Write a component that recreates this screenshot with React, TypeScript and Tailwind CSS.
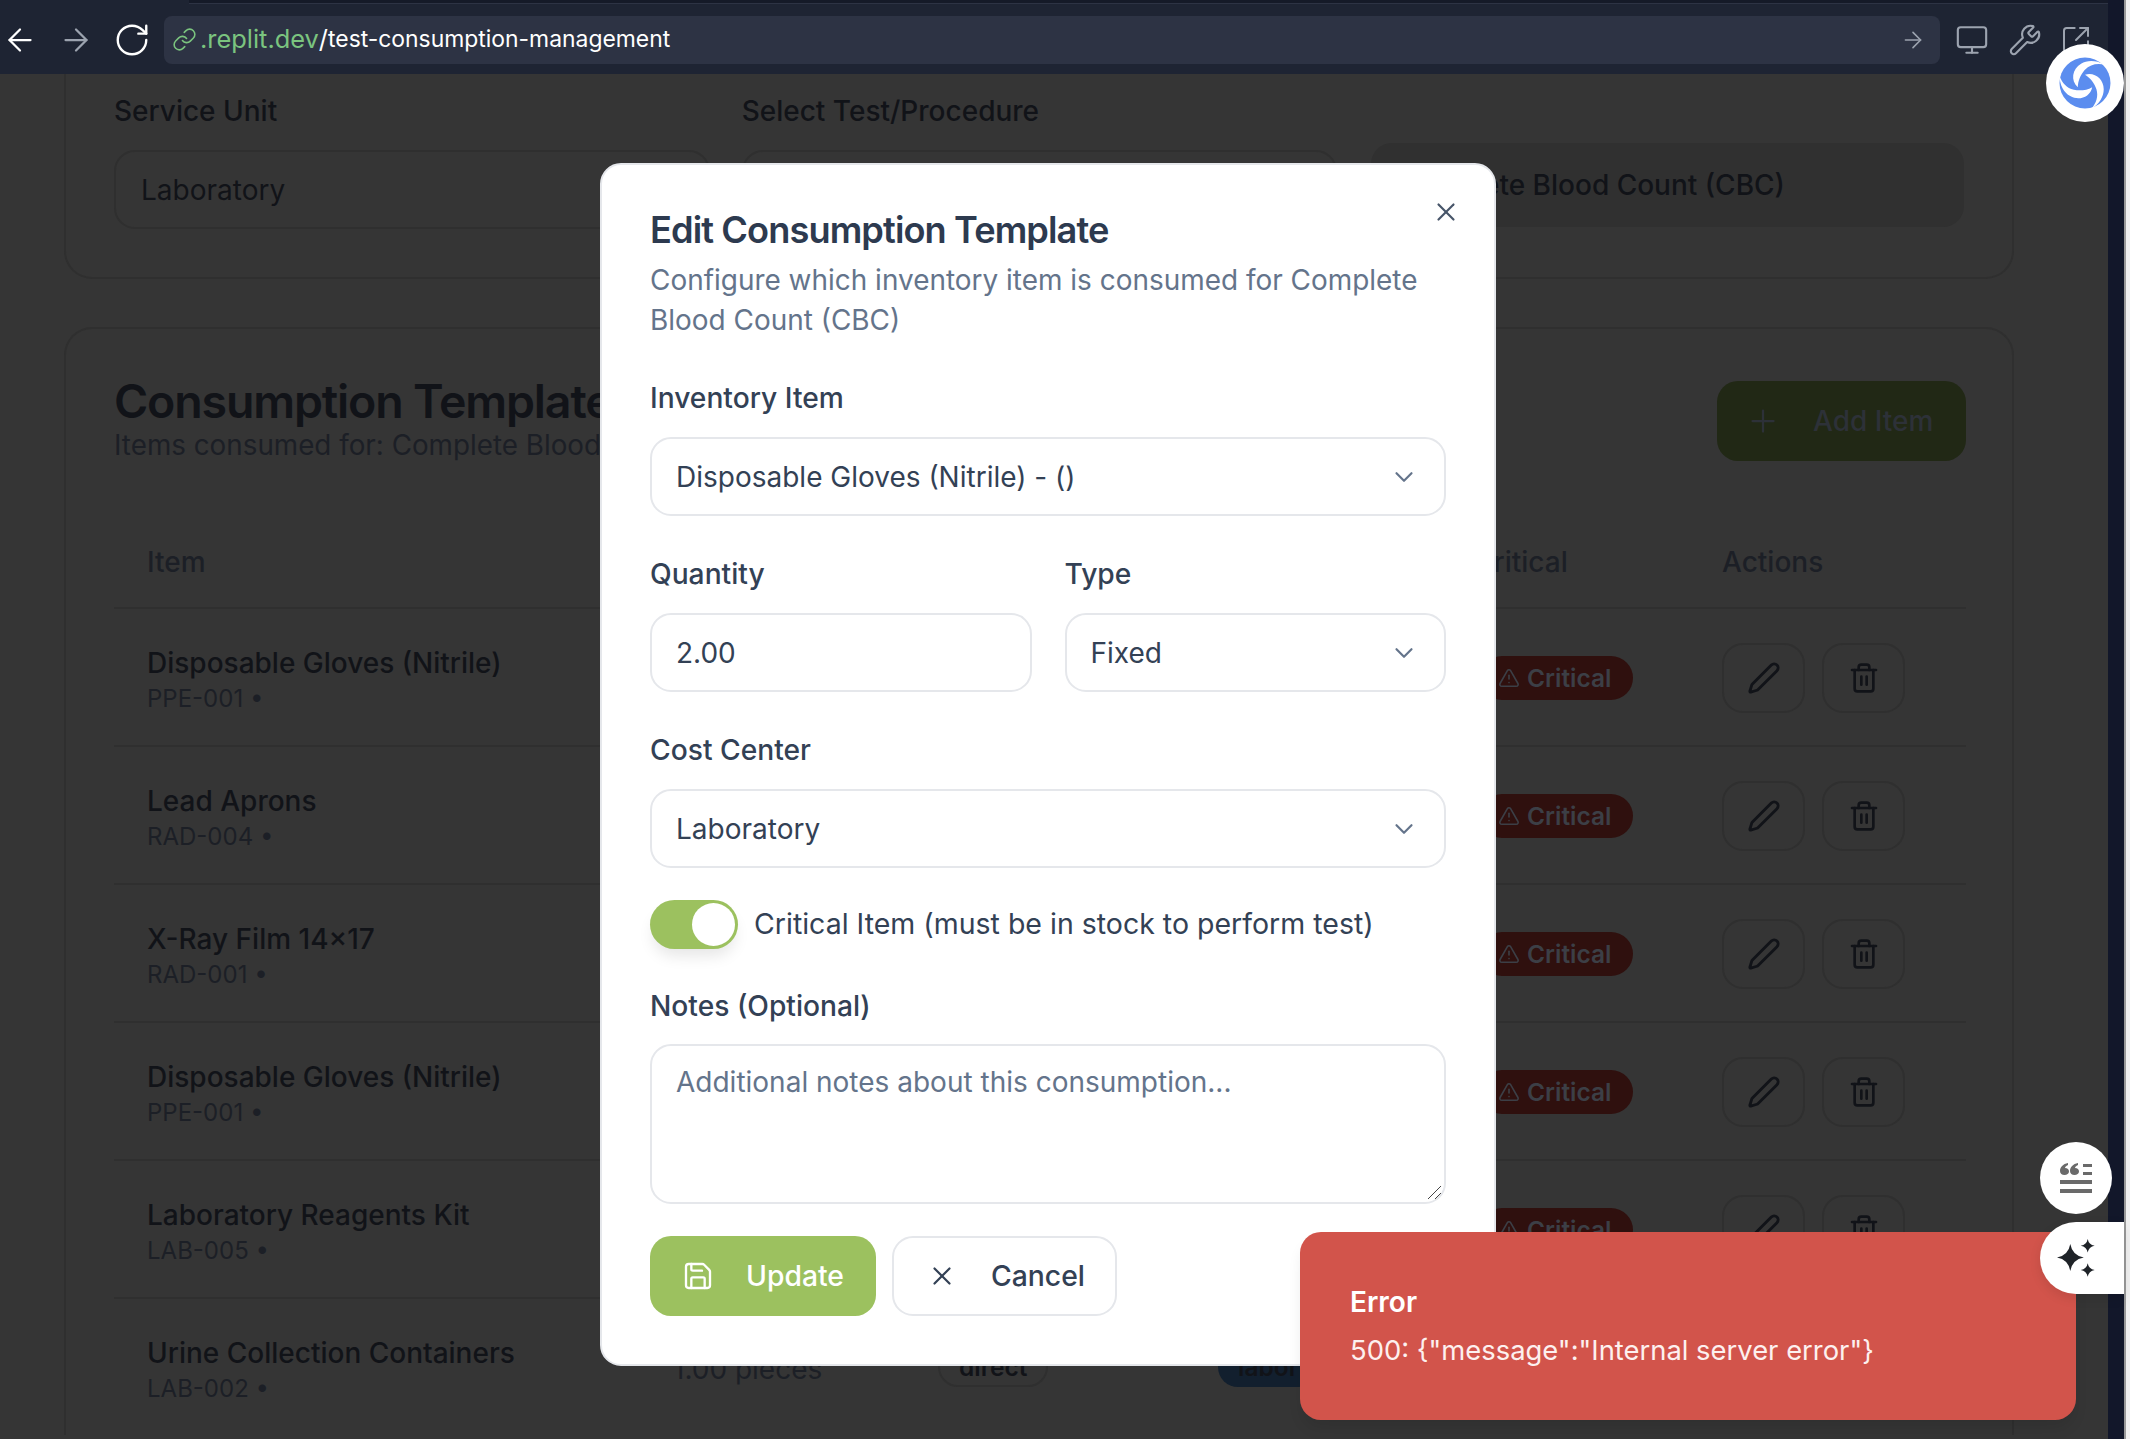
import { AlertTriangle, ArrowLeft, ArrowRight, ChevronDown, Link, Monitor, Pen, Plus, RotateCw, Save, SquareArrowOutUpRight, Trash2, Wrench, X } from 'lucide-react';
import React from 'react';

const rows = [
	{ name: 'Disposable Gloves (Nitrile)', sku: 'PPE-001' },
	{ name: 'Lead Aprons', sku: 'RAD-004' },
	{ name: 'X-Ray Film 14×17', sku: 'RAD-001' },
	{ name: 'Disposable Gloves (Nitrile)', sku: 'PPE-001' },
	{ name: 'Laboratory Reagents Kit', sku: 'LAB-005' },
	{ name: 'Urine Collection Containers', sku: 'LAB-002' },
];

const Field: React.FC<{ label: string; value: string; select?: boolean }> = ({ label, value, select }) => (
	<div>
		<p className="h-[40px] text-[28.2px] leading-[40px] text-[#334155] font-medium">{label}</p>
		<div className="mt-[19px] h-[79px] flex items-center justify-between rounded-[21px] border-2 border-[#e5e7eb] pl-[24px] pr-[25px] text-[#334155]">
			<span>{value}</span>
			{select && <ChevronDown className="h-[30px] w-[30px] text-[#64748b]" strokeWidth={1.75} />}
		</div>
	</div>
);

const Swirl = () => (
	<svg viewBox="0 0 100 100" className="h-[52px] w-[52px]">
		<circle cx="50" cy="50" r="49" fill="#5b8def" />
		<g fill="#ffffff">
			<path d="M50 34C68 28 86 42 86 62 86 76 78 90 62 100 72 88 76 76 72 62 68 50 60 40 50 34Z" />
			<path transform="rotate(120 50 50)" d="M50 34C68 28 86 42 86 62 86 76 78 90 62 100 72 88 76 76 72 62 68 50 60 40 50 34Z" />
			<path transform="rotate(240 50 50)" d="M50 34C68 28 86 42 86 62 86 76 78 90 62 100 72 88 76 76 72 62 68 50 60 40 50 34Z" />
		</g>
	</svg>
);

const App: React.FC = () => {
	return (
		<div className="relative h-[1439px] w-[2130px] overflow-hidden bg-[#353535] font-['Inter',sans-serif] text-[28px] text-[#111318]">
			{/* Browser toolbar */}
			<div className="flex h-[74px] w-[2108px] items-center bg-[#1e2433] pl-[2px] pt-[5px]">
				<ArrowLeft className="h-[36px] w-[36px] text-white" strokeWidth={1.5} />
				<ArrowRight className="ml-[20px] h-[36px] w-[36px] text-[#9ca3af]" strokeWidth={1.5} />
				<RotateCw className="ml-[19px] h-[38px] w-[38px] text-white" strokeWidth={1.5} />
				<div className="ml-[13px] flex h-[48px] w-[1776px] items-center rounded-[8px] bg-[#2d3344] pl-[8px] pr-[14px]">
					<Link className="h-[25px] w-[25px] text-[#7bc47f]" strokeWidth={1.5} />
					<span className="ml-[3px] text-[25.4px] text-[#7bc47f]">.replit.dev</span>
					<span className="text-[25.4px] text-white">/</span>
					<span className="text-[22.9px] text-white">test-consumption-management</span>
					<ArrowRight className="ml-auto h-[26px] w-[26px] text-[#9ca3af]" strokeWidth={1.5} />
				</div>
				<Monitor className="ml-[15px] h-[34px] w-[34px] text-[#9ca3af]" strokeWidth={1.5} />
				<Wrench className="ml-[19px] h-[34px] w-[34px] text-[#9ca3af]" strokeWidth={1.5} />
				<SquareArrowOutUpRight className="ml-[18px] h-[32px] w-[32px] text-[#9ca3af]" strokeWidth={1.5} />
			</div>
			<div className="absolute left-[189px] top-0 h-[4px] w-[1919px] border-b border-[#2d3344] bg-[#151a28]" />

			{/* Page behind the dialog */}
			<div className="ml-[64px] w-[1950px]">
				<div className="flex h-[205px] rounded-b-[28px] border-x-2 border-b-2 border-[#2f2f2f] px-[48px]">
					<div className="w-[596px]">
						<p className="mt-[17px] h-[40px] leading-[40px] font-medium">Service Unit</p>
						<div className="mt-[19px] flex h-[79px] items-center rounded-[21px] border-2 border-[#2f2f2f] px-[25px]">Laboratory</div>
					</div>
					<div className="ml-[32px] w-[596px]">
						<p className="mt-[17px] h-[40px] leading-[40px] font-medium">Select Test/Procedure</p>
						<div className="mt-[19px] h-[79px] rounded-[21px] border-2 border-[#2f2f2f]" />
					</div>
					<div className="ml-[34px] mt-[69px] flex h-[84px] w-[593px] items-center rounded-[21px] bg-[#303030] px-[25px] font-medium">Complete Blood Count (CBC)</div>
				</div>

				<div className="mt-[48px] rounded-t-[28px] border-x-2 border-t-2 border-[#2f2f2f] pl-[48px] pr-[46px]">
					<div className="flex h-[187px] items-start justify-between">
						<div className="pt-[46px]">
							<h2 className="text-[46.5px] leading-[52px] font-semibold tracking-tight">Consumption Templates</h2>
							<p className="text-[27.8px] leading-[36px] text-[#1c1f26]">Items consumed for: Complete Blood Count (CBC)</p>
						</div>
						<div className="mt-[52px] flex h-[80px] w-[249px] items-center gap-[32px] rounded-[21px] bg-[#212815] pl-[28px] text-[#2d3138] font-medium">
							<Plus className="h-[36px] w-[36px]" strokeWidth={1.5} />
							<span>Add Item</span>
						</div>
					</div>
					<div className="grid h-[91px] grid-cols-[526px_265px_280px_262px_242px_1fr] items-center pl-[33px] text-[#1c1f26] font-medium">
						<span>Item</span>
						<span />
						<span />
						<span />
						<span className="-ml-[7px]">Critical</span>
						<span>Actions</span>
					</div>
					{rows.map((row) => (
						<div key={row.name + row.sku} className="grid h-[138px] grid-cols-[526px_265px_280px_262px_242px_1fr] items-center border-t-2 border-[#2f2f2f] pl-[33px]">
							<div className="pt-[6px]">
								<p className="text-[28px] leading-[36px] font-medium">{row.name}</p>
								<p className="text-[24px] leading-[35px] text-[#1c1f26]">{row.sku} •</p>
							</div>
							<p className="pt-[4px] text-[#1c1f26]">1.00 pieces</p>
							<span className="flex h-[40px] w-fit items-center rounded-full border-2 border-[#2f2f2f] px-[19px] text-[24.5px] font-semibold">direct</span>
							<span className="flex h-[40px] w-fit items-center rounded-full bg-[#121f2e] px-[20px] text-[24.5px] font-semibold">labor</span>
							<span className="mt-[2px] flex h-[44px] w-fit items-center gap-[7px] rounded-full bg-[#2f100e] pl-[18px] pr-[22px] text-[24.5px] font-semibold text-[#3c3f46]">
								<AlertTriangle className="h-[22px] w-[22px]" strokeWidth={1.75} />
								Critical
							</span>
							<div className="mt-[2px] flex gap-[17px]">
								<span className="flex h-[70px] w-[83px] items-center justify-center rounded-[21px] border-2 border-[#2f2f2f]">
									<Pen className="h-[34px] w-[34px]" strokeWidth={2} />
								</span>
								<span className="flex h-[70px] w-[83px] items-center justify-center rounded-[21px] border-2 border-[#2f2f2f]">
									<Trash2 className="h-[32px] w-[32px]" strokeWidth={2} />
								</span>
							</div>
						</div>
					))}
				</div>
			</div>

			{/* Right window strip */}
			<div className="absolute right-0 top-0 flex h-full w-[22px]">
				<div className="h-full w-[16px] bg-[#12172a]" />
				<div className="h-full w-[2px] bg-[#999999]" />
				<div className="h-full w-[4px] bg-[#f0f0f0]" />
			</div>

			{/* Dialog */}
			<div className="absolute left-[600px] top-[163px] h-[1203px] w-[896px] rounded-[21px] border-2 border-[#e5e7eb] bg-white px-[48px] pt-[44px]">
				<X className="absolute right-[33px] top-[32px] h-[30px] w-[30px] text-[#475569]" strokeWidth={1.75} />
				<h3 className="text-[36.2px] leading-[42px] font-semibold tracking-tight text-[#2d3a4f]">Edit Consumption Template</h3>
				<p className="mt-[10px] w-[780px] text-[27.95px] leading-[39.5px] text-[#64748b]">Configure which inventory item is consumed for Complete Blood Count (CBC)</p>
				<div className="mt-[38px] flex flex-col gap-[38px] text-[28px]">
					<Field label="Inventory Item" value="Disposable Gloves (Nitrile) - ()" select />
					<div className="grid grid-cols-2 gap-[33px]">
						<Field label="Quantity" value="2.00" />
						<Field label="Type" value="Fixed" select />
					</div>
					<Field label="Cost Center" value="Laboratory" select />
				</div>
				<div className="mt-[32px] flex items-center gap-[16px] text-[28.5px] text-[#334155]">
					<span className="flex h-[49px] w-[88px] items-center justify-end rounded-full bg-[#9cc15f] pr-[3px] shadow-[0_10px_15px_-3px_rgba(0,0,0,0.1)]">
						<span className="h-[43px] w-[43px] rounded-full bg-white" />
					</span>
					<span>Critical Item (must be in stock to perform test)</span>
				</div>
				<p className="mt-[37px] h-[40px] text-[28.2px] leading-[40px] font-medium text-[#334155]">Notes (Optional)</p>
				<div className="relative mt-[18px] h-[160px] rounded-[21px] border-2 border-[#e5e7eb] pl-[24px] pr-[25px] pt-[15px] text-[28px] text-[#64748b]">
					Additional notes about this consumption...
					<svg viewBox="0 0 16 16" className="absolute bottom-[2px] right-[2px] h-[16px] w-[16px]" stroke="#444" strokeWidth="1" fill="none">
						<path d="M2 15 15 2M9 15l6-6" />
					</svg>
				</div>
				<div className="mt-[32px] flex gap-[16px] text-[28.3px]">
					<span className="flex h-[80px] w-[226px] items-center gap-[32px] rounded-[21px] bg-[#9cc15f] pl-[32px] font-medium text-white">
						<Save className="h-[32px] w-[32px]" strokeWidth={1.75} />
						Update
					</span>
					<span className="flex h-[80px] w-[225px] items-center gap-[34px] rounded-[21px] border-2 border-[#e5e7eb] pl-[33px] font-medium text-[#334155]">
						<X className="h-[30px] w-[30px]" strokeWidth={1.75} />
						Cancel
					</span>
				</div>
			</div>

			{/* Toast */}
			<div className="absolute left-[1300px] top-[1232px] h-[188px] w-[776px] rounded-[21px] bg-[#d2544b] pl-[50px] pt-[50px] text-white shadow-[0_10px_15px_-3px_rgba(0,0,0,0.1)]">
				<p className="h-[40px] text-[28px] leading-[40px] font-semibold">Error</p>
				<p className="mt-[8px] text-[27.4px] leading-[40px] text-[#fdf0ef]">500: {'{"message":"Internal server error"}'}</p>
			</div>

			{/* Floating extension buttons */}
			<div className="absolute left-[2046px] top-[44px] flex h-[78px] w-[78px] items-center justify-center rounded-full bg-white">
				<Swirl />
			</div>
			<div className="absolute left-[2040px] top-[1142px] flex h-[72px] w-[72px] items-center justify-center rounded-full bg-white">
				<svg viewBox="0 0 32 30" className="h-[30px] w-[32px]" fill="#6a6a6a">
					<path d="M0 8C0 4 3 1 8 0v2C6 3 5 4 5 5 7.500 5 9 6.500 9 8.500S7 12 4.500 12 0 10.500 0 8Z" />
					<path d="M10 8C10 4 13 1 18 0v2C16 3 15 4 15 5 17.500 5 19 6.500 19 8.500S17 12 14.500 12 10 10.500 10 8Z" />
					<path d="M23 1h9v3h-9ZM23 9h9v3h-9ZM0 17h32v4H0ZM0 26h32v4H0Z" />
				</svg>
			</div>
			<div className="absolute left-[2040px] top-[1222px] flex h-[72px] w-[84px] items-center rounded-l-full bg-white pl-[17px] shadow-[0_4px_12px_rgba(0,0,0,0.1)]">
				<svg viewBox="0 0 38 38" className="h-[38px] w-[38px]" fill="#1f2328">
					<path d="M13.300 5Q15.300 16.500 26.800 18.500 15.300 20.500 13.300 32 11.300 20.500 0 18.500 11.300 16.500 13.300 5Z" />
					<path d="M30.700 0Q31.700 5.700 37.700 6.700 31.700 7.700 30.700 13.400 29.700 7.700 23.700 6.700 29.700 5.700 30.700 0Z" />
					<path d="M30.700 24.300Q31.700 30 37.700 31 31.700 32 30.700 37.700 29.700 32 23.700 31 29.700 30 30.700 24.300Z" />
				</svg>
			</div>
		</div>
	);
};

export default App;
